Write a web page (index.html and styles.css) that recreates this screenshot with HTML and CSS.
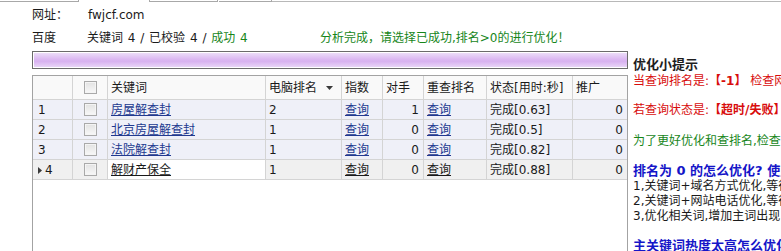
FILE: index.html
```html
<!DOCTYPE html>
<html lang="zh-CN">

<head>
    <meta charset="UTF-8">
    <meta name="viewport" content="width=device-width, initial-scale=1.0">
    <link rel="stylesheet" href="styles.css">
</head>

<body>
    <div class="topbar">
        <span class="seg seg-a"></span>
        <span class="seg-gap"></span>
        <span class="seg seg-b"></span>
        <span class="seg seg-c"></span>
        <span class="seg seg-d"></span>
    </div>

    <div class="info">
        <div class="info-row">
            <span class="label">网址：</span>
            <span>fwjcf.com</span>
        </div>
        <div class="info-row">
            <span class="label engine">百度</span>
            <span class="stats">关键词 4 / 已校验 4 / <span class="ok">成功 4</span></span>
            <span class="ok">分析完成，请选择已成功,排名&gt;0的进行优化！</span>
        </div>
    </div>

    <div class="main">
        <div class="left">
            <div class="progress"><div class="progress-fill"></div></div>

            <div class="grid">
                <div class="row head">
                    <div class="cell rh"></div>
                    <div class="cell cb"><span class="check"></span></div>
                    <div class="cell">关键词</div>
                    <div class="cell sort">电脑排名
                        <svg class="sort-icon" width="7" height="4" viewBox="0 0 7 4"><path d="M0 0h7L3.5 4z" /></svg>
                    </div>
                    <div class="cell">指数</div>
                    <div class="cell">对手</div>
                    <div class="cell">重查排名</div>
                    <div class="cell">状态[用时:秒]</div>
                    <div class="cell">推广</div>
                </div>

                <div class="row">
                    <div class="cell rh">1</div>
                    <div class="cell cb"><span class="check"></span></div>
                    <div class="cell"><a>房屋解查封</a></div>
                    <div class="cell">2</div>
                    <div class="cell"><a>查询</a></div>
                    <div class="cell num">1</div>
                    <div class="cell"><a>查询</a></div>
                    <div class="cell">完成[0.63]</div>
                    <div class="cell num">0</div>
                </div>
                <div class="row">
                    <div class="cell rh">2</div>
                    <div class="cell cb"><span class="check"></span></div>
                    <div class="cell"><a>北京房屋解查封</a></div>
                    <div class="cell">1</div>
                    <div class="cell"><a>查询</a></div>
                    <div class="cell num">0</div>
                    <div class="cell"><a>查询</a></div>
                    <div class="cell">完成[0.5]</div>
                    <div class="cell num">0</div>
                </div>
                <div class="row">
                    <div class="cell rh">3</div>
                    <div class="cell cb"><span class="check"></span></div>
                    <div class="cell"><a>法院解查封</a></div>
                    <div class="cell">1</div>
                    <div class="cell"><a>查询</a></div>
                    <div class="cell num">0</div>
                    <div class="cell"><a>查询</a></div>
                    <div class="cell">完成[0.82]</div>
                    <div class="cell num">0</div>
                </div>
                <div class="row current">
                    <div class="cell rh"><svg class="cur-icon" width="4" height="7" viewBox="0 0 4 7"><path d="M0 0l4 3.5L0 7z" /></svg>4</div>
                    <div class="cell cb"><span class="check"></span></div>
                    <div class="cell active"><a>解财产保全</a></div>
                    <div class="cell">1</div>
                    <div class="cell"><a>查询</a></div>
                    <div class="cell num">0</div>
                    <div class="cell"><a>查询</a></div>
                    <div class="cell">完成[0.88]</div>
                    <div class="cell num">0</div>
                </div>
            </div>
        </div>

        <!-- tips run past the window edge, as in the app -->
        <div class="tips">
            <div class="tips-title">优化小提示</div>
            <div class="tip red">当查询排名是:<b>【-1】</b> 检查网</div>
            <div class="tip red gap">若查询状态是:<b>【超时/失败】</b></div>
            <div class="tip green gap2">为了更好优化和查排名,检查</div>
            <div class="tip blue gap">排名为 0 的怎么优化? 使用</div>
            <div class="tip">1,关键词+域名方式优化,等待</div>
            <div class="tip">2,关键词+网站电话优化,等待</div>
            <div class="tip">3,优化相关词,增加主词出现</div>
            <div class="tip blue gap">主关键词热度太高怎么优化</div>
        </div>
    </div>
</body>

</html>
```

FILE: styles.css
```css
html,
body {
    height: 100%;
}

body {
    margin: 0;
    padding: 0;
    background: #ffffff;
    color: #1a1a1a;
    font-family: "DejaVu Sans", "Noto Sans CJK SC", sans-serif;
    font-size: 12px;
    overflow: hidden;
    white-space: nowrap;
}

/* bits of the tab strip above, cut off by the window */
.topbar {
    display: flex;
    height: 3px;
}

.topbar .seg {
    border-bottom: 1px solid #a8a8a8;
    height: 1px;
}

.seg-a {
    width: 78px;
    border-right: 1px solid #a8a8a8;
}

.seg-gap {
    width: 70px;
}

.seg-b {
    width: 67px;
    border-left: 1px solid #a8a8a8;
    border-right: 1px solid #a8a8a8;
}

.seg-c {
    width: 52px;
    margin-left: 1px;
    border-right: 1px solid #a8a8a8;
}

.seg-d {
    flex: 1;
    border-bottom-color: #b8b8b8 !important;
}

.info {
    padding: 2px 0 0 32px;
}

.info-row {
    display: flex;
    height: 20px;
    line-height: 20px;
}

.info-row + .info-row {
    margin-top: 3px;
}

.info .label {
    width: 56px;
}

.info .engine {
    width: 55px;
}

.info .stats {
    width: 233px;
    word-spacing: 1px;
}

.ok {
    color: #17861a;
}

.main {
    display: flex;
    margin-top: 3px;
}

.left {
    margin-left: 32px;
    width: 596px;
}

.progress {
    border: 1px solid #6b6b6b;
    padding: 1px 0 1px 1px;
    box-sizing: border-box;
    height: 18px;
}

.progress-fill {
    height: 100%;
    background: linear-gradient(#ecdcf8, #dbb8f2 45%, #d8b2f0 60%, #e8d4f7);
}

.grid {
    margin-top: 6px;
    border: 1px solid #a3a3a3;
    border-bottom: none;
    height: 200px;
    background: #ffffff;
}

.row {
    display: grid;
    grid-template-columns: 40px 35px 158px 76px 41px 41px 63px 86px 54px;
    height: 20px;
    background: #eff0f8;
}

.row.head {
    height: 24px;
    background: #f9f9f9;
}

.cell {
    box-sizing: border-box;
    border-right: 1px solid #d4d4d4;
    border-bottom: 1px solid #d4d4d4;
    padding: 1px 3px 0;
    line-height: 18px;
    overflow: hidden;
    display: flex;
    align-items: center;
}

.row.head .cell {
    line-height: 22px;
}

.cell:last-child {
    border-right: none;
}

.cell.rh {
    padding-left: 5px;
}

.cell.cb {
    justify-content: center;
    padding-top: 0;
}

.cell.num {
    justify-content: flex-end;
    padding-right: 4px;
}

.cell.sort {
    justify-content: space-between;
    padding-right: 8px;
}

.sort-icon path,
.cur-icon path {
    fill: #3a3a3a;
}

.cur-icon {
    margin-right: 3px;
}

.check {
    width: 11px;
    height: 11px;
    border: 1px solid #a9a9a9;
    background: linear-gradient(#e2e2e2, #f8f8f8);
    box-shadow: inset 0 0 0 1px #f4f4f4;
}

.cell a {
    color: #22398f;
    text-decoration: underline;
}

.row.current {
    background: #f0f0f0;
}

.row.current .cell.active {
    background: #ffffff;
}

.row.current .cell a {
    color: #1a1a1a;
}

.tips {
    flex: 1;
    padding: 5px 0 0 5px;
    overflow: hidden;
}

.tips-title {
    font-size: 13px;
    font-weight: bold;
    color: #1e1e1e;
    line-height: 17px;
    margin-bottom: 1px;
}

.tip {
    line-height: 15px;
}

.tip.gap {
    margin-top: 14px;
}

.tip.gap2 {
    margin-top: 16px;
}

.tip.red {
    color: #d80c0c;
}

.tip.green {
    color: #17861a;
}

.tip.blue {
    color: #1515c8;
    font-size: 13px;
    font-weight: bold;
    line-height: 16px;
}
```
